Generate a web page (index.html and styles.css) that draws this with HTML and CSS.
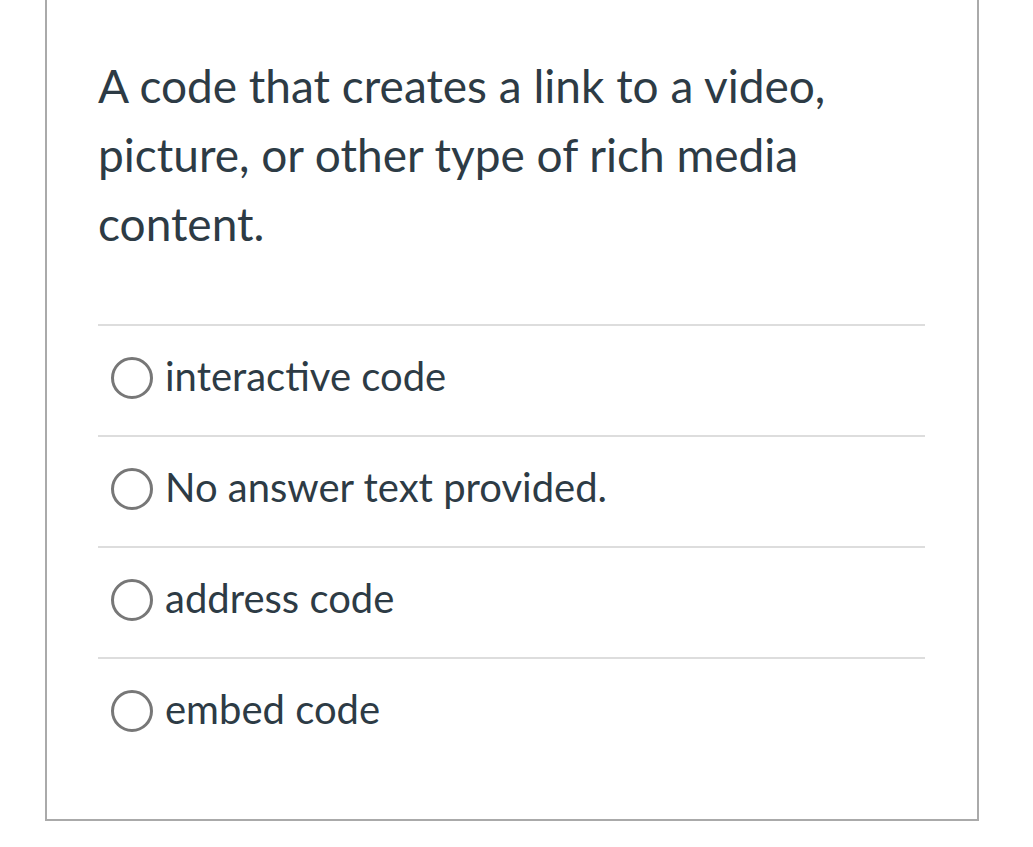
FILE: index.html
```html
<!DOCTYPE html>
<html>
<head>
<meta charset="utf-8">
<link rel="stylesheet" href="styles.css">
</head>
<body>
<div class="card">
  <div class="question">A code that creates a link to a video, picture, or other type of rich media content.</div>
  <div class="answers">
    <label class="answer"><span class="radio"></span><span class="answer-text">interactive code</span></label>
    <label class="answer"><span class="radio"></span><span class="answer-text">No answer text provided.</span></label>
    <label class="answer"><span class="radio"></span><span class="answer-text">address code</span></label>
    <label class="answer"><span class="radio"></span><span class="answer-text">embed code</span></label>
  </div>
</div>
</body>
</html>
```
FILE: styles.css
```css
html, body {
  margin: 0;
  padding: 0;
  background: #ffffff;
}
body {
  font-family: Lato, "Open Sans", sans-serif;
  color: #2d3b45;
}
.card {
  margin-left: 45px;
  border: 2px solid #aaaaaa;
  border-top: 0;
  padding: 51px 52px 51px 51px;
  box-sizing: content-box;
  width: 827px;
}
.question {
  font-size: 46px;
  line-height: 69px;
  padding-bottom: 66px;
}
.answers {
  display: flex;
  flex-direction: column;
}
.answer {
  display: flex;
  align-items: center;
  gap: 12px;
  height: 109px;
  box-sizing: content-box;
  border-top: 2px solid #dddddd;
  padding-left: 13px;
}
.answer + .answer {
  height: 109px;
}
.radio {
  width: 36px;
  height: 36px;
  border: 3px solid #777777;
  border-radius: 50%;
  flex: none;
  margin-bottom: 6px;
}
.answer-text {
  font-size: 40px;
  margin-bottom: 10px;
}
```
